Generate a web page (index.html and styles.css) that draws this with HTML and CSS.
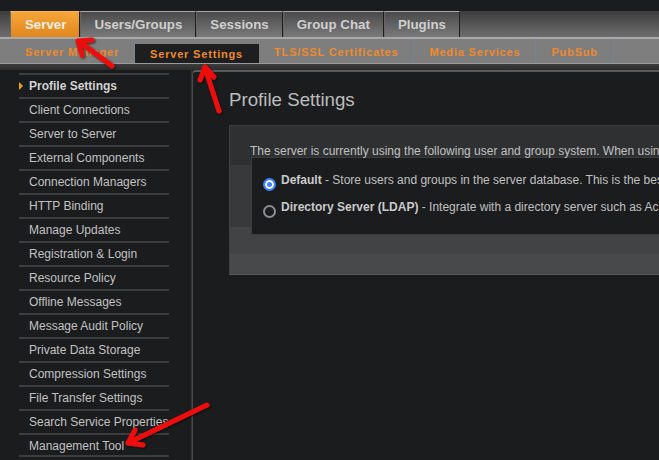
FILE: index.html
```html
<!DOCTYPE html>
<html>
<head>
<meta charset="utf-8">
<link rel="stylesheet" href="styles.css">
</head>
<body>
<div class="page">
  <div class="topstrip"></div>
  <div class="tabs">
    <div class="tab active">Server</div>
    <div class="tab">Users/Groups</div>
    <div class="tab">Sessions</div>
    <div class="tab">Group Chat</div>
    <div class="tab">Plugins</div>
  </div>
  <div class="subnav">
    <div class="sub">Server Manager</div>
    <div class="sub current">Server Settings</div>
    <div class="sub">TLS/SSL Certificates</div>
    <div class="sub">Media Services</div>
    <div class="sub">PubSub</div>
  </div>
  <div class="shade"></div>
  <div class="main">
    <div class="sidebar">
      <ul class="menu">
        <li class="selected">Profile Settings</li>
        <li>Client Connections</li>
        <li>Server to Server</li>
        <li>External Components</li>
        <li>Connection Managers</li>
        <li>HTTP Binding</li>
        <li>Manage Updates</li>
        <li>Registration &amp; Login</li>
        <li>Resource Policy</li>
        <li>Offline Messages</li>
        <li>Message Audit Policy</li>
        <li>Private Data Storage</li>
        <li>Compression Settings</li>
        <li>File Transfer Settings</li>
        <li>Search Service Properties</li>
        <li>Management Tool</li>
      </ul>
    </div>
    <div class="content">
      <h1 class="title">Profile Settings</h1>
      <div class="box">
        <p class="intro">The server is currently using the following user and group system. When usin</p>
        <div class="inner">
          <div class="opt"><span class="radio on"></span><span class="label"><b>Default</b> - Store users and groups in the server database. This is the bes</span></div>
          <div class="opt"><span class="radio"></span><span class="label"><b>Directory Server (LDAP)</b> - Integrate with a directory server such as Ac</span></div>
        </div>
      </div>
    </div>
  </div>
  <svg class="arrows" width="659" height="460" viewBox="0 0 659 460">
    <defs>
      <filter id="sh" x="-20%" y="-20%" width="140%" height="140%">
        <feDropShadow dx="1" dy="1" stdDeviation="1" flood-color="#000" flood-opacity="0.7"/>
      </filter>
    </defs>
    <g filter="url(#sh)" stroke="#ee1111" stroke-width="5" stroke-linecap="round" stroke-linejoin="round" fill="none">
      <path d="M112 66 L80 42"/>
      <path d="M78 41 L82 55 M78 41 L92 40"/>
      <path d="M219 111 L205 68"/>
      <path d="M205 67 L200 80 M205 67 L214 77"/>
      <path d="M207 405 L130 442"/>
      <path d="M128 443 L135 430 M128 443 L143 445"/>
    </g>
  </svg>
</div>
</body>
</html>
```

FILE: styles.css
```css
* { box-sizing: border-box; }
html, body { margin: 0; padding: 0; }
body {
  background: #1b1c1e;
  font-family: "Liberation Sans", Arial, sans-serif;
  width: 659px;
  height: 460px;
  overflow: hidden;
}
.page { position: relative; width: 659px; height: 460px; overflow: hidden; }
.topstrip { height: 11px; background: #1b1c1f; }
.tabs {
  display: flex;
  height: 26px;
  padding-left: 10px;
  background: linear-gradient(#3c3c3c, #6e6e6e);
}
.tab {
  height: 26px;
  padding: 0 13px;
  border-top: 1px solid #a8a8a8;
  border-left: 1px solid #666;
  border-right: 1px solid #1e1e1e;
  background: linear-gradient(#4a4a4a, #7a7a7a);
  color: #cfcfcf;
  font-weight: bold;
  font-size: 13.3px;
  line-height: 25px;
  white-space: nowrap;
}
.tab.active {
  padding: 0 13px 0 14px;
  background: linear-gradient(#f5a63a, #e1861c);
  border-top-color: #f7b650;
  color: #f3ede4;
}
.subnav {
  display: flex;
  height: 27px;
  padding-left: 10px;
  background: #7e7e7e;
  border-top: 2px solid #a9a9a9;
  border-bottom: 1px solid #9a9a9a;
  align-items: stretch;
}
.sub {
  padding: 0 15px;
  color: #ef8a2a;
  font-size: 11px;
  font-weight: bold;
  letter-spacing: 0.82px;
  line-height: 26px;
  border-right: 1px dotted #6f8aa6;
  white-space: nowrap;
}
.sub.current {
  background: #1d1e20;
  margin-top: 5px;
  line-height: 20px;
  border-right-color: transparent;
}
.shade { height: 6px; background: linear-gradient(#3c3c3c, #2c2c2c); }
.main { display: flex; height: 416px; }
.sidebar {
  flex: none;
  width: 192px;
  border-right: 1px solid #353535;
  padding: 3px 0 0 19px;
}
.menu { list-style: none; margin: 0; padding: 0; width: 150px; }
.menu li {
  position: relative;
  height: 24px;
  border-top: 2px solid #3c3d3f;
  padding-left: 10px;
  color: #c2c2c2;
  font-size: 12px;
  line-height: 22px;
  white-space: nowrap;
}
.menu li:last-child { border-bottom: 2px solid #3c3d3f; }
.menu li.selected { font-weight: bold; color: #d2d2d2; }
.menu li.selected::before {
  content: "";
  position: absolute;
  left: 0;
  top: 7px;
  border-left: 4px solid #e6a21c;
  border-top: 4px solid transparent;
  border-bottom: 4px solid transparent;
}
.content {
  flex: 1;
  min-width: 0;
  overflow: hidden;
  border-top: 2px solid #5a5a5a;
  border-left: 1px solid #4a4a4a;
  border-top-left-radius: 4px;
  background: #1b1c1e;
  padding-left: 36px;
}
.title {
  margin: 16px 0 0 0;
  font-weight: normal;
  font-size: 18.7px;
  color: #bcbcbc;
  line-height: 24px;
}
.box {
  margin-top: 13px;
  height: 150px;
  background: linear-gradient(#2f3032 0, #2f3032 39px, #38393b 39px, #38393b 101px, #424344 101px, #424344 128px, #48494a 128px);
  border-top: 1px solid #3a3b3d;
  border-left: 1px solid #3f4042;
  border-bottom: 1px solid #555;
  padding-top: 19px;
}
.intro {
  margin: 0 0 0 20px;
  font-size: 12px;
  color: #c0c0c0;
  line-height: 12px;
  white-space: nowrap;
}
.inner {
  margin-left: 21px;
  background: #1b1c1e;
  border: 1px solid #3a3b3d;
  border-right: none;
  height: 78px;
  padding-top: 14px;
}
.opt {
  display: flex;
  align-items: flex-start;
  margin-left: 11px;
  height: 27px;
  font-size: 12px;
  color: #c0c0c0;
  white-space: nowrap;
}
.opt b { color: #cacaca; }
.radio {
  width: 13px;
  height: 13px;
  border-radius: 50%;
  border: 2px solid #8d8d92;
  margin: 6px 5px 0 0;
  flex: none;
  background: #1b1c1e;
}
.radio.on {
  border: 2px solid #3b82f6;
  background: #3b82f6;
  box-shadow: inset 0 0 0 2px #ffffff;
}
.label { line-height: 16px; }
.arrows { position: absolute; left: 0; top: 0; pointer-events: none; }
```
